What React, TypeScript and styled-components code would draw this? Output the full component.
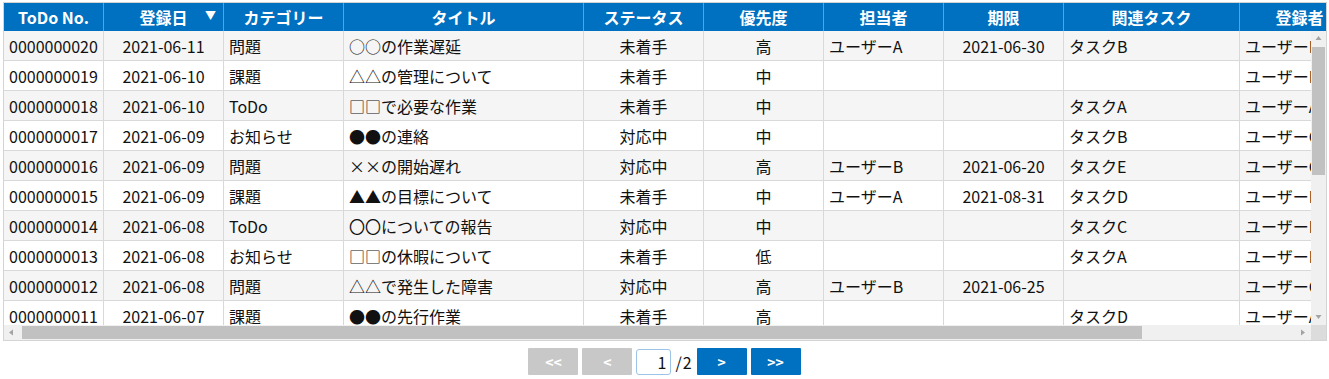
import React from 'react';
import styled, { createGlobalStyle } from 'styled-components';

const GlobalStyle = createGlobalStyle`
  body {
    margin: 0;
    background: #ffffff;
    font-family: "Noto Sans CJK JP", "Noto Sans", sans-serif;
    color: #111;
  }
`;

type Align = 'left' | 'center' | 'right';

interface Column {
  key: string;
  label: string;
  width: number;
  align: Align;
  sorted?: boolean;
}

const columns: Column[] = [
  { key: 'no', label: 'ToDo No.', width: 100, align: 'left' },
  { key: 'date', label: '登録日', width: 120, align: 'center', sorted: true },
  { key: 'category', label: 'カテゴリー', width: 120, align: 'left' },
  { key: 'title', label: 'タイトル', width: 240, align: 'left' },
  { key: 'status', label: 'ステータス', width: 120, align: 'center' },
  { key: 'priority', label: '優先度', width: 120, align: 'center' },
  { key: 'owner', label: '担当者', width: 120, align: 'left' },
  { key: 'due', label: '期限', width: 120, align: 'center' },
  { key: 'related', label: '関連タスク', width: 176, align: 'left' },
  { key: 'author', label: '登録者', width: 120, align: 'left' },
  { key: 'updated', label: '更新日', width: 120, align: 'center' },
];

const rows: string[][] = [
  ['0000000020', '2021-06-11', '問題', '○○の作業遅延', '未着手', '高', 'ユーザーA', '2021-06-30', 'タスクB', 'ユーザーD', '2021-06-11'],
  ['0000000019', '2021-06-10', '課題', '△△の管理について', '未着手', '中', '', '', '', 'ユーザーE', '2021-06-10'],
  ['0000000018', '2021-06-10', 'ToDo', '□□で必要な作業', '未着手', '中', '', '', 'タスクA', 'ユーザーA', '2021-06-10'],
  ['0000000017', '2021-06-09', 'お知らせ', '●●の連絡', '対応中', '中', '', '', 'タスクB', 'ユーザーC', '2021-06-09'],
  ['0000000016', '2021-06-09', '問題', '××の開始遅れ', '対応中', '高', 'ユーザーB', '2021-06-20', 'タスクE', 'ユーザーC', '2021-06-09'],
  ['0000000015', '2021-06-09', '課題', '▲▲の目標について', '未着手', '中', 'ユーザーA', '2021-08-31', 'タスクD', 'ユーザーD', '2021-06-09'],
  ['0000000014', '2021-06-08', 'ToDo', '〇〇についての報告', '対応中', '中', '', '', 'タスクC', 'ユーザーD', '2021-06-08'],
  ['0000000013', '2021-06-08', 'お知らせ', '□□の休暇について', '未着手', '低', '', '', 'タスクA', 'ユーザーE', '2021-06-08'],
  ['0000000012', '2021-06-08', '問題', '△△で発生した障害', '対応中', '高', 'ユーザーB', '2021-06-25', '', 'ユーザーC', '2021-06-08'],
  ['0000000011', '2021-06-07', '課題', '●●の先行作業', '未着手', '高', '', '', 'タスクD', 'ユーザーA', '2021-06-07'],
];

const Page = styled.div`
  padding: 2px 0 0 3px;
`;

const GridFrame = styled.div`
  width: 1324px;
  box-sizing: border-box;
  border: 1px solid #d4d4d4;
  display: grid;
  grid-template-columns: 1fr 15px;
  grid-template-rows: 28px 294px 15px;
  overflow: hidden;
`;

const HeaderStrip = styled.div`
  grid-column: 1 / 3;
  background: #0070c0;
  overflow: hidden;
  display: flex;
`;

const HeaderCell = styled.div<{ $w: number }>`
  position: relative;
  flex: 0 0 ${(p) => p.$w}px;
  box-sizing: border-box;
  border-right: 1px solid #5d9fd6;
  display: flex;
  align-items: center;
  justify-content: center;
  color: #ffffff;
  font-weight: 700;
  font-size: 16px;
  white-space: nowrap;
`;

const SortMark = styled.span`
  position: absolute;
  right: 7px;
  top: 7px;
  font-size: 11px;
  line-height: 1;
`;

const BodyViewport = styled.div`
  overflow: hidden;
  background: #ffffff;
`;

const Row = styled.div<{ $striped: boolean }>`
  display: flex;
  height: 30px;
  box-sizing: border-box;
  border-bottom: 1px solid #d9d9d9;
  background: ${(p) => (p.$striped ? '#f5f5f5' : '#ffffff')};
`;

const Cell = styled.div<{ $w: number; $align: Align }>`
  flex: 0 0 ${(p) => p.$w}px;
  box-sizing: border-box;
  border-right: 1px solid #d9d9d9;
  padding: 0 5px;
  display: flex;
  align-items: center;
  justify-content: ${(p) => (p.$align === 'center' ? 'center' : p.$align === 'right' ? 'flex-end' : 'flex-start')};
  font-size: 16px;
  white-space: nowrap;
  overflow: hidden;
`;

const VScroll = styled.div`
  background: #f0f0f0;
  display: flex;
  flex-direction: column;
  align-items: center;
`;

const HScroll = styled.div`
  background: #f0f0f0;
  display: flex;
  align-items: center;
`;

const ScrollArrow = styled.div`
  flex: 0 0 15px;
  width: 15px;
  height: 15px;
  display: flex;
  align-items: center;
  justify-content: center;
`;

const VTrack = styled.div`
  flex: 1;
  width: 100%;
  display: flex;
  justify-content: center;
`;

const VThumb = styled.div`
  margin-top: 1px;
  width: 13px;
  height: 128px;
  background: #c1c1c1;
`;

const HTrack = styled.div`
  flex: 1;
  height: 100%;
  display: flex;
  align-items: center;
`;

const HThumb = styled.div`
  margin-left: 3px;
  width: 1120px;
  height: 13px;
  background: #c1c1c1;
`;

const Corner = styled.div`
  background: #dcdcdc;
`;

const Pager = styled.div`
  margin-top: 7px;
  padding-right: 3px;
  display: flex;
  justify-content: center;
  align-items: center;
  gap: 4px;
`;

const PageButton = styled.button<{ $enabled: boolean }>`
  width: 50px;
  height: 27px;
  border: none;
  border-radius: 1px;
  padding: 0;
  background: ${(p) => (p.$enabled ? '#0070c0' : '#c8c8c8')};
  color: #ffffff;
  font-family: "Noto Sans CJK JP", "Noto Sans", sans-serif;
  font-weight: 700;
  font-size: 14px;
`;

const PageInput = styled.input`
  width: 35px;
  height: 26px;
  box-sizing: border-box;
  border: 1px solid #9cc3e8;
  border-radius: 3px;
  padding: 0 4px 0 0;
  text-align: right;
  font-family: "Noto Sans CJK JP", "Noto Sans", sans-serif;
  font-size: 16px;
  color: #111;
  outline: none;
`;

const PageTotal = styled.span`
  font-size: 16px;
  letter-spacing: 1px;
`;

const Arrow = ({ dir }: { dir: 'up' | 'down' | 'left' | 'right' }) => {
  const pts = {
    up: '1.5,6 4.5,2 7.5,6',
    down: '1.5,2 4.5,6 7.5,2',
    left: '6,1.5 2,4.5 6,7.5',
    right: '2,1.5 6,4.5 2,7.5',
  }[dir];
  return (
    <svg width="9" height="9" viewBox="0 0 9 9">
      <polygon points={pts} fill="#a3a3a3" />
    </svg>
  );
};

export default function App() {
  return (
    <Page>
      <GlobalStyle />
      <GridFrame>
        <HeaderStrip>
          {columns.map((c) => (
            <HeaderCell key={c.key} $w={c.width}>
              {c.label}
              {c.sorted && <SortMark>▼</SortMark>}
            </HeaderCell>
          ))}
        </HeaderStrip>
        <BodyViewport>
          {rows.map((r, i) => (
            <Row key={r[0]} $striped={i % 2 === 0}>
              {columns.map((c, j) => (
                <Cell key={c.key} $w={c.width} $align={c.align}>
                  {r[j]}
                </Cell>
              ))}
            </Row>
          ))}
        </BodyViewport>
        <VScroll>
          <ScrollArrow>
            <Arrow dir="up" />
          </ScrollArrow>
          <VTrack>
            <VThumb />
          </VTrack>
          <ScrollArrow>
            <Arrow dir="down" />
          </ScrollArrow>
        </VScroll>
        <HScroll>
          <ScrollArrow>
            <Arrow dir="left" />
          </ScrollArrow>
          <HTrack>
            <HThumb />
          </HTrack>
          <ScrollArrow>
            <Arrow dir="right" />
          </ScrollArrow>
        </HScroll>
        <Corner />
      </GridFrame>
      <Pager>
        <PageButton $enabled={false}>&lt;&lt;</PageButton>
        <PageButton $enabled={false}>&lt;</PageButton>
        <PageInput readOnly value="1" />
        <PageTotal>/2</PageTotal>
        <PageButton $enabled>&gt;</PageButton>
        <PageButton $enabled>&gt;&gt;</PageButton>
      </Pager>
    </Page>
  );
}
